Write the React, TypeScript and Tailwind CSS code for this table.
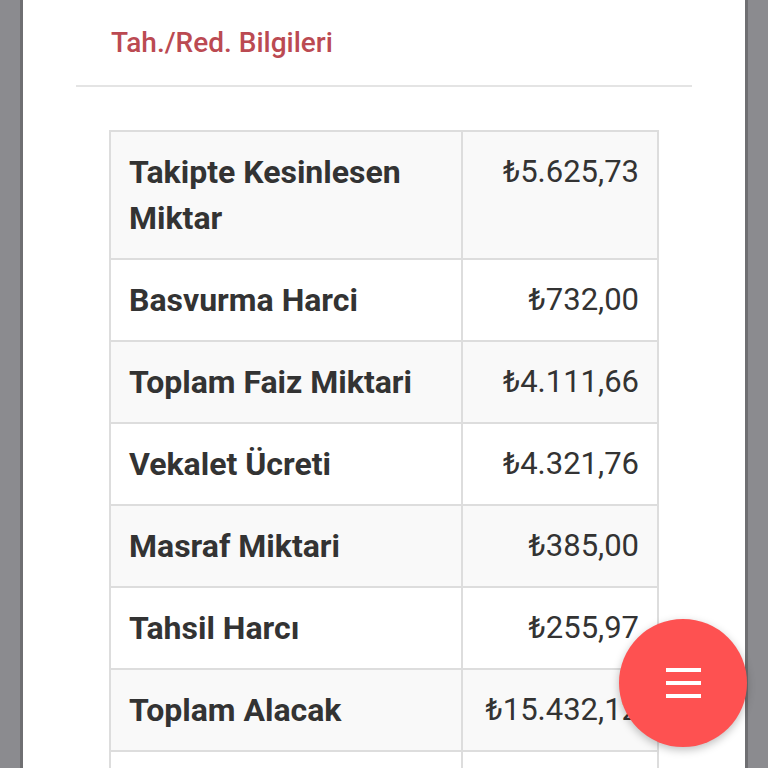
const rows: [string, string][] = [
    ['Takipte Kesinlesen Miktar', '₺5.625,73'],
    ['Basvurma Harci', '₺732,00'],
    ['Toplam Faiz Miktari', '₺4.111,66'],
    ['Vekalet Ücreti', '₺4.321,76'],
    ['Masraf Miktari', '₺385,00'],
    ['Tahsil Harcı', '₺255,97'],
    ['Toplam Alacak', '₺15.432,12'],
]

export default function App() {
    return (
        <div
            className="relative h-[768px] w-full overflow-hidden bg-[#8b8b8f] px-[20px]"
            style={{ fontFamily: 'Roboto, "Liberation Sans", sans-serif' }}
        >
            <div className="h-full border-x-[3px] border-[#6f6f72] bg-white">
                <div className="mx-[53px] pt-[26px]">
                    {/* title */}
                    <h2 className="pl-[35px] text-[28px] leading-[34px] font-medium text-[#bb4a52]">
                        Tah./Red. Bilgileri
                    </h2>
                    <div className="mt-[25px] h-[2px] bg-[#e4e4e4]" />

                    {/* table */}
                    <div className="mx-[33px] mt-[43px]">
                        <table className="w-full border-collapse border-2 border-[#dddddd] text-[31px] leading-[46px] text-[#333333]">
                            <tbody>
                                {rows.map(([label, value], i) => (
                                    <tr key={label} className={i % 2 === 0 ? 'bg-[#f9f9f9]' : 'bg-white'}>
                                        <td className="w-[352px] border-2 border-[#dddddd] px-[18px] py-[17px] align-top text-[32px] font-bold">
                                            {label}
                                        </td>
                                        <td className="border-2 border-[#dddddd] px-[18px] py-[17px] text-right align-top whitespace-nowrap">
                                            {value}
                                        </td>
                                    </tr>
                                ))}
                                {/* next row, below the fold */}
                                <tr className="h-[82px] bg-white">
                                    <td className="border-2 border-[#dddddd]" />
                                    <td className="border-2 border-[#dddddd]" />
                                </tr>
                            </tbody>
                        </table>
                    </div>
                </div>
            </div>

            {/* floating menu button */}
            <button className="absolute top-[619px] left-[619px] flex h-[128px] w-[128px] items-center justify-center rounded-full bg-[#fe5151] shadow-[0_3px_8px_rgba(0,0,0,0.25)]">
                <div className="flex flex-col gap-[9px]">
                    <span className="block h-[4px] w-[35px] bg-white" />
                    <span className="block h-[4px] w-[35px] bg-white" />
                    <span className="block h-[4px] w-[35px] bg-white" />
                </div>
            </button>
        </div>
    )
}
